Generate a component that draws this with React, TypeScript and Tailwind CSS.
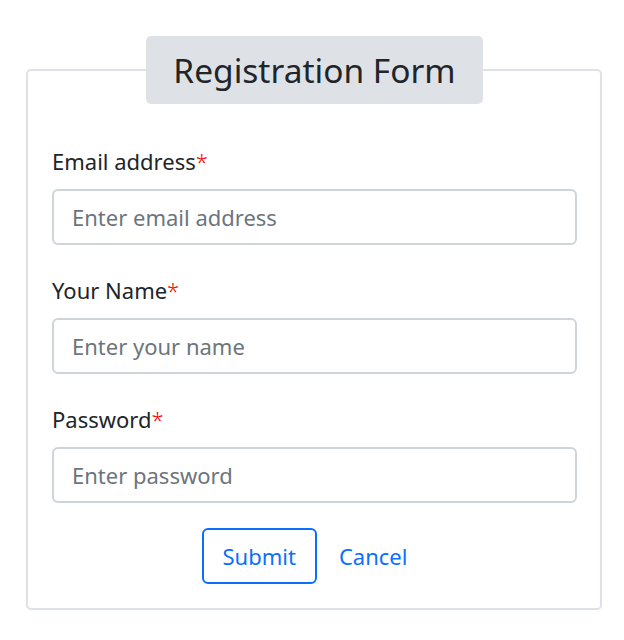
export default function App() {
  return (
    <div className="min-h-screen bg-white px-[26px] pt-[36px] text-[#212529] [font-family:'Noto_Sans',sans-serif]">
      <form onSubmit={(e) => e.preventDefault()}>
        <fieldset className="w-[576px] rounded-[5px] border-2 border-[#dee2e6] pb-[24px] pl-6 pr-[23px]">
          <legend className="mx-auto rounded-[5px] bg-[#dee2e6] px-[27px] py-[11px] text-[33.5px] leading-[46px] text-[#212529]">
            Registration Form
          </legend>

          <div className="mt-[42px] flex flex-col">
            <label className="mb-[13px] text-[22px] leading-[30px]">
              Email address<span className="font-light text-[red]">*</span>
            </label>
            <input
              type="email"
              placeholder="Enter email address"
              className="h-[56px] w-full rounded-[6px] border-2 border-[#ced4da] px-[18px] text-[22px] placeholder:text-[#6c757d] outline-none"
            />
          </div>

          <div className="mt-[30px] flex flex-col">
            <label className="mb-[13px] text-[22px] leading-[30px]">
              Your Name<span className="font-light text-[red]">*</span>
            </label>
            <input
              type="text"
              placeholder="Enter your name"
              className="h-[56px] w-full rounded-[6px] border-2 border-[#ced4da] px-[18px] text-[22px] placeholder:text-[#6c757d] outline-none"
            />
          </div>

          <div className="mt-[30px] flex flex-col">
            <label className="mb-[13px] text-[22px] leading-[30px]">
              Password<span className="font-light text-[red]">*</span>
            </label>
            <input
              type="password"
              placeholder="Enter password"
              className="h-[56px] w-full rounded-[6px] border-2 border-[#ced4da] px-[18px] text-[22px] placeholder:text-[#6c757d] outline-none"
            />
          </div>

          <div className="mt-[25px] flex items-center justify-center gap-[2px]">
            <button
              type="submit"
              className="h-[56px] rounded-[6px] border-2 border-[#0d6efd] px-[19px] text-[22px] text-[#0d6efd]"
            >
              Submit
            </button>
            <button
              type="button"
              className="h-[56px] rounded-[6px] border-2 border-transparent px-[18px] text-[22px] text-[#0d6efd]"
            >
              Cancel
            </button>
          </div>
        </fieldset>
      </form>
    </div>
  );
}
